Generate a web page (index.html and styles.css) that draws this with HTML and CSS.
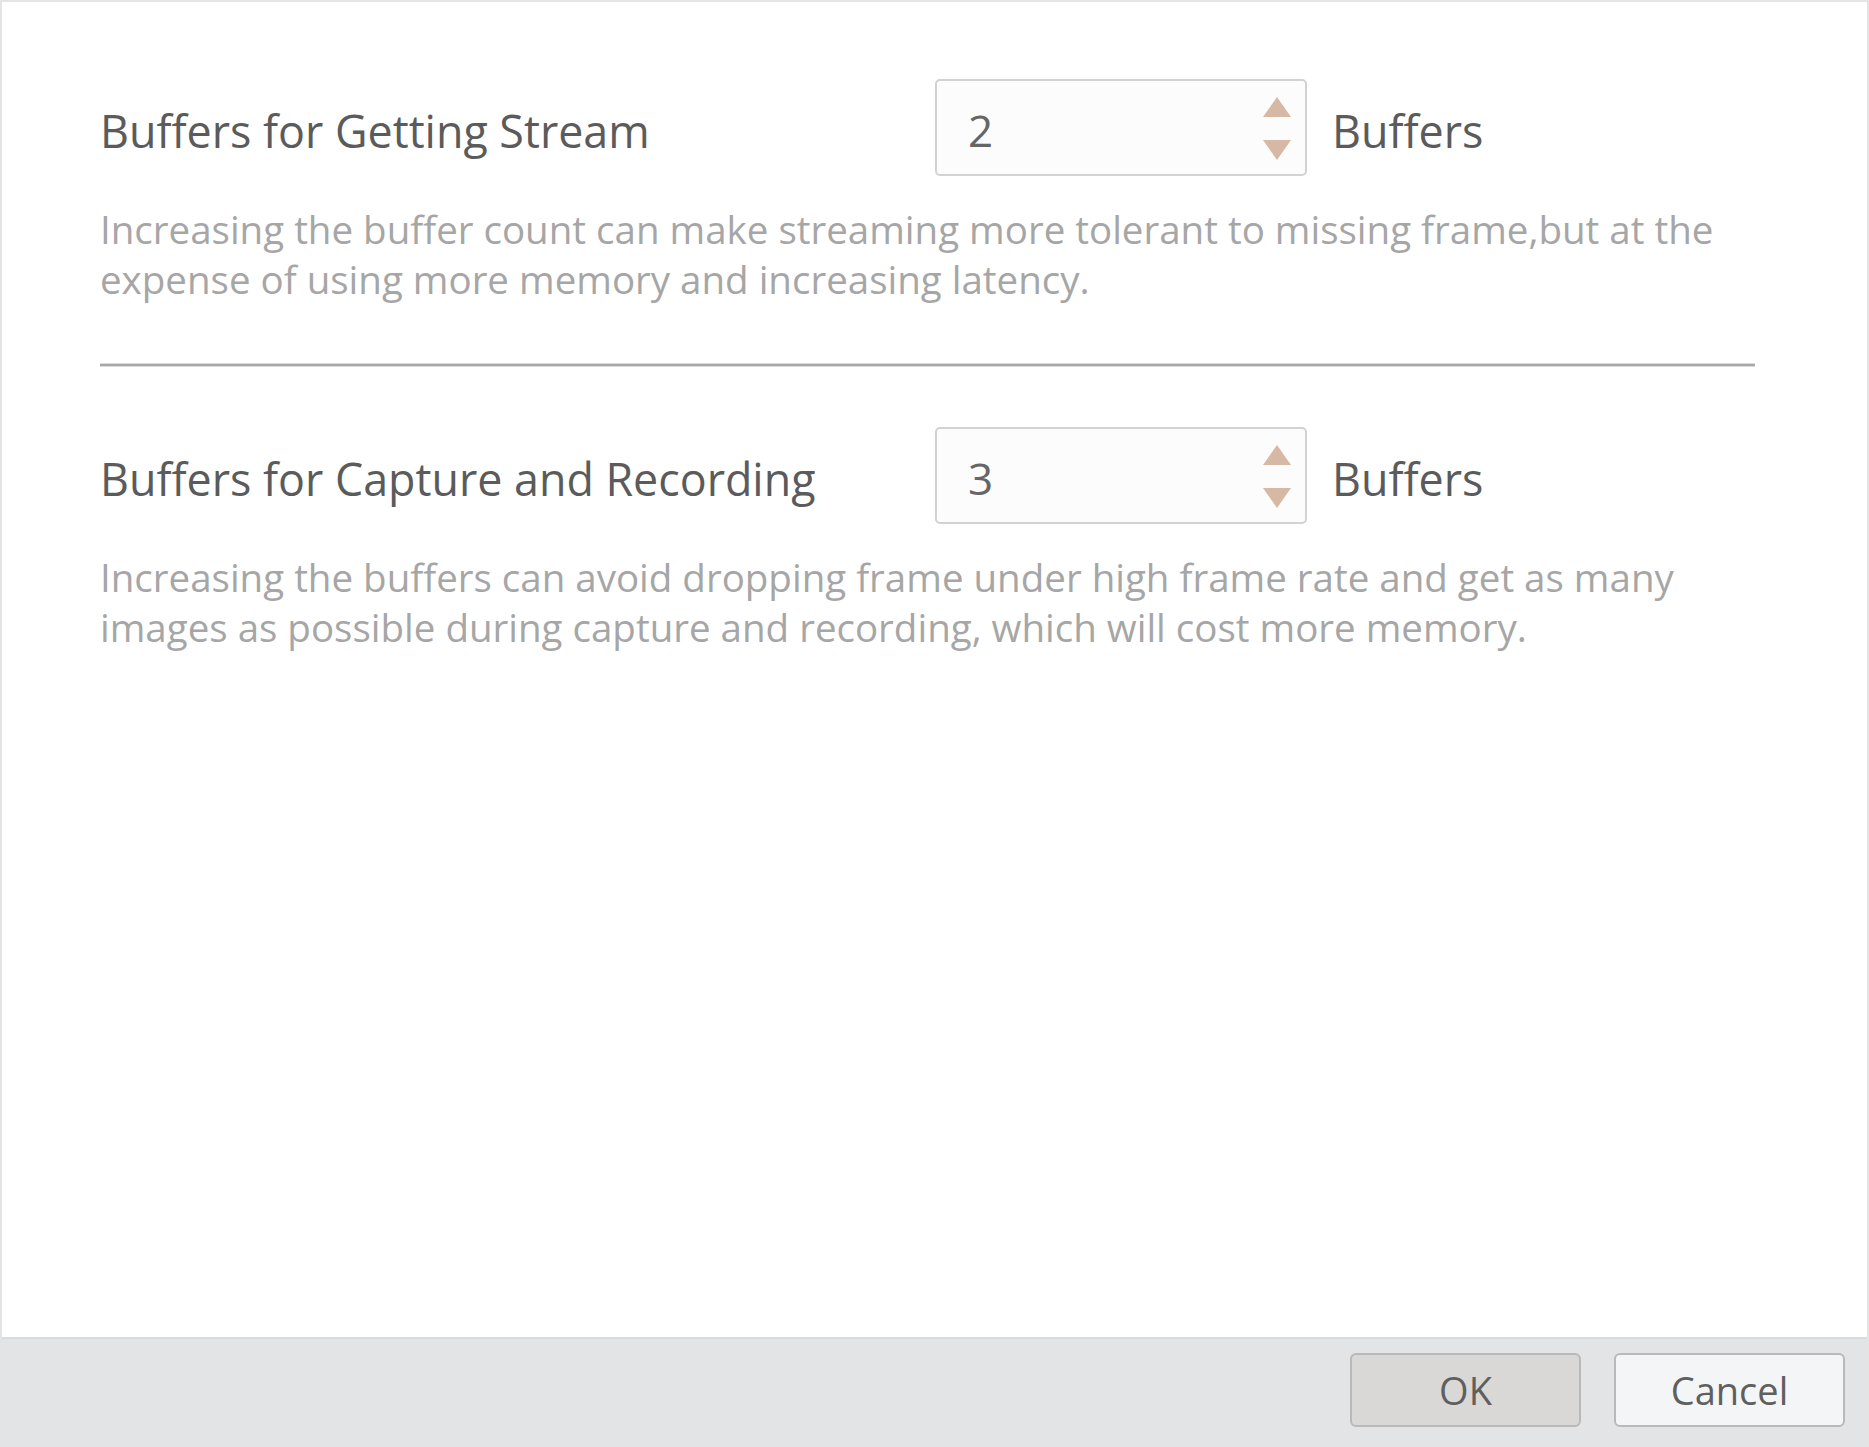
FILE: index.html
```html
<!DOCTYPE html>
<html lang="en">
<head>
<meta charset="utf-8">
<title>Buffer Settings</title>
<link rel="stylesheet" href="styles.css">
</head>
<body>
<div class="dialog">
  <main class="content">
    <section class="setting first">
      <div class="row">
        <div class="label">Buffers for Getting Stream</div>
        <div class="spinbox">
          <span class="value">2</span>
          <span class="stepper">
            <svg class="arrow" width="28" height="20" viewBox="0 0 28 20"><polygon points="14,0 28,20 0,20" /></svg>
            <svg class="arrow" width="28" height="20" viewBox="0 0 28 20"><polygon points="0,0 28,0 14,20" /></svg>
          </span>
        </div>
        <div class="unit">Buffers</div>
      </div>
      <p class="desc">Increasing the buffer count can make streaming more tolerant to missing frame,but at the expense of using more memory and increasing latency.</p>
    </section>
    <hr class="divider">
    <section class="setting second">
      <div class="row">
        <div class="label">Buffers for Capture and Recording</div>
        <div class="spinbox">
          <span class="value">3</span>
          <span class="stepper">
            <svg class="arrow" width="28" height="20" viewBox="0 0 28 20"><polygon points="14,0 28,20 0,20" /></svg>
            <svg class="arrow" width="28" height="20" viewBox="0 0 28 20"><polygon points="0,0 28,0 14,20" /></svg>
          </span>
        </div>
        <div class="unit">Buffers</div>
      </div>
      <p class="desc">Increasing the buffers can avoid dropping frame under high frame rate and get as many images as possible during capture and recording, which will cost more memory.</p>
    </section>
  </main>
  <footer class="footer">
    <button class="btn btn-ok">OK</button>
    <button class="btn btn-cancel">Cancel</button>
  </footer>
</div>
</body>
</html>
```

FILE: styles.css
```css
* { box-sizing: border-box; }
html, body { margin: 0; padding: 0; background: #ffffff; }
body {
  font-family: "Open Sans", "Noto Sans", "DejaVu Sans", sans-serif;
  width: 1869px;
  height: 1447px;
  overflow: hidden;
}
.dialog {
  width: 1869px;
  height: 1447px;
  display: flex;
  flex-direction: column;
  border-top: 2px solid #e4e4e4;
  border-left: 2px solid #e4e4e4;
  border-right: 2px solid #e4e4e4;
  background: #ffffff;
}
.content {
  flex: 1;
  padding: 77px 112px 0 98px;
}
.row {
  display: flex;
  align-items: center;
  height: 97px;
}
.label {
  width: 835px;
  font-size: 44.8px;
  color: #5b5b5b;
  padding-top: 5px;
}
.spinbox {
  width: 372px;
  height: 97px;
  border: 2px solid #d2d2d2;
  border-radius: 5px;
  background: #fcfcfc;
  display: flex;
  align-items: center;
  justify-content: space-between;
  padding: 0 14px 0 31px;
}
.value {
  font-size: 44px;
  color: #666666;
  padding-top: 5px;
}
.stepper {
  display: flex;
  flex-direction: column;
  gap: 23px;
  padding-top: 2px;
}
.arrow { display: block; }
.arrow polygon { fill: #d6b8a4; }
.unit {
  margin-left: 25px;
  font-size: 44.8px;
  color: #5b5b5b;
  padding-top: 5px;
}
.desc {
  margin: 28px 0 0 0;
  font-size: 38.5px;
  line-height: 50px;
  color: #a6a6a6;
}
.divider {
  margin: 60px 0 61px 0;
  height: 2px;
  border: 0;
  background: #a8a8a8;
  box-shadow: 0 -1px 0 #dcdcdc, 0 1px 0 #dcdcdc;
}
.footer {
  height: 110px;
  flex: none;
  border-top: 2px solid #d9dcdc;
  background: #e3e4e6;
  display: flex;
  justify-content: flex-end;
  align-items: flex-start;
  gap: 33px;
  padding: 14px 22px 0 0;
}
.btn {
  width: 231px;
  height: 74px;
  border: 2px solid #b9b9b9;
  border-radius: 6px;
  font-family: "Open Sans", "Noto Sans", sans-serif;
  font-size: 38px;
  color: #5f5f5f;
  padding: 0;
}
.btn-ok { background: #d9d8d6; }
.btn-cancel { background: #f4f5f7; }
```
